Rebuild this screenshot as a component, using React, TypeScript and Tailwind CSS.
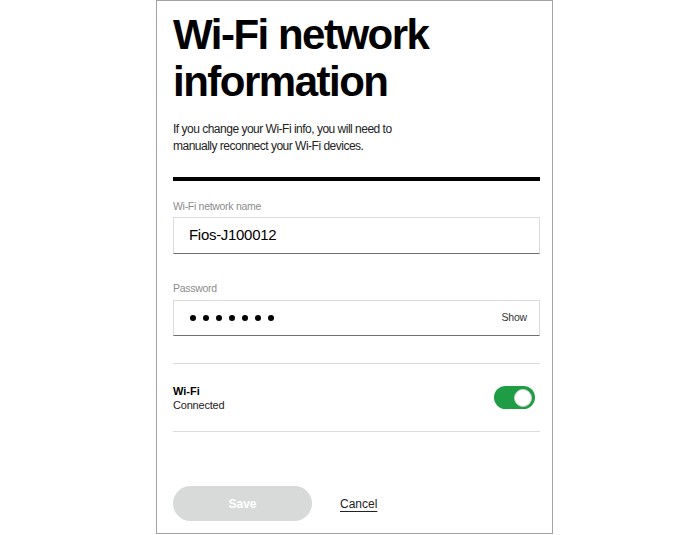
import { useState } from "react";

const font = { fontFamily: '"Liberation Sans", Arial, sans-serif' };

function Toggle({ on, onChange }: { on: boolean; onChange: () => void }) {
  return (
    <button
      type="button"
      onClick={onChange}
      className={`flex h-[23px] w-[41px] items-center rounded-full px-[3px] ${
        on ? "justify-end bg-[#1f9d45]" : "justify-start bg-[#bdbdbd]"
      }`}
    >
      <span className="h-[18px] w-[18px] rounded-full border border-[#cfcfcf] bg-white" />
    </button>
  );
}

export default function App() {
  const [wifiOn, setWifiOn] = useState(true);
  const [name, setName] = useState("Fios-J100012");

  return (
    <div className="h-[535px] w-[700px] overflow-hidden bg-white" style={font}>
      <div className="ml-[156px] flex h-[534px] w-[397px] flex-col border border-[#a4a4a4] pl-[16px] pr-[12px] pt-[10px]">
        <h1 className="text-[42px] font-bold leading-[47px] tracking-[-1.5px] text-black">
          Wi-Fi network
          <br />
          information
        </h1>
        <p className="mt-[16px] text-[12px] leading-[17px] tracking-[-0.5px] text-[#222]">
          If you change your Wi-Fi info, you will need to
          <br />
          manually reconnect your Wi-Fi devices.
        </p>

        <div className="mt-[22px] h-[4px] bg-black" />

        <label className="mt-[19px] text-[10.5px] leading-[12px] tracking-[-0.3px] text-[#8c8c8c]">
          Wi-Fi network name
        </label>
        <div className="mt-[5px] flex h-[37px] items-center border border-[#dcdcdc] border-b-[#6f6f6f] px-[15px]">
          <input
            value={name}
            onChange={(e) => setName(e.target.value)}
            className="w-full bg-transparent text-[15px] tracking-[-0.3px] text-black outline-none"
          />
        </div>

        <label className="mt-[28px] text-[10.5px] leading-[12px] tracking-[-0.3px] text-[#8c8c8c]">
          Password
        </label>
        <div className="mt-[6px] flex h-[36px] items-center justify-between border border-[#dcdcdc] border-b-[#6f6f6f] pl-[16px] pr-[12px]">
          <div className="flex gap-[7px]">
            {Array.from({ length: 7 }).map((_, i) => (
              <span key={i} className="h-[6px] w-[6px] rounded-full bg-black" />
            ))}
          </div>
          <span className="text-[10.5px] tracking-[-0.2px] text-[#333]">Show</span>
        </div>

        <div className="mt-[27px] h-px bg-[#dcdcdc]" />
        <div className="flex h-[67px] items-center justify-between pr-[5px]">
          <div className="pt-[1px]">
            <div className="text-[11px] font-bold leading-[14px] text-black">Wi-Fi</div>
            <div className="text-[11px] leading-[14px] tracking-[-0.2px] text-[#222]">Connected</div>
          </div>
          <Toggle on={wifiOn} onChange={() => setWifiOn(!wifiOn)} />
        </div>
        <div className="h-px bg-[#dcdcdc]" />

        <div className="mt-[54px] flex items-center gap-[28px]">
          <button
            type="button"
            disabled
            className="h-[35px] w-[139px] rounded-full bg-[#d8dada] text-[12px] font-bold text-white"
          >
            Save
          </button>
          <button type="button" className="text-[12px] text-[#222] underline underline-offset-[3px]">
            Cancel
          </button>
        </div>
      </div>
    </div>
  );
}
